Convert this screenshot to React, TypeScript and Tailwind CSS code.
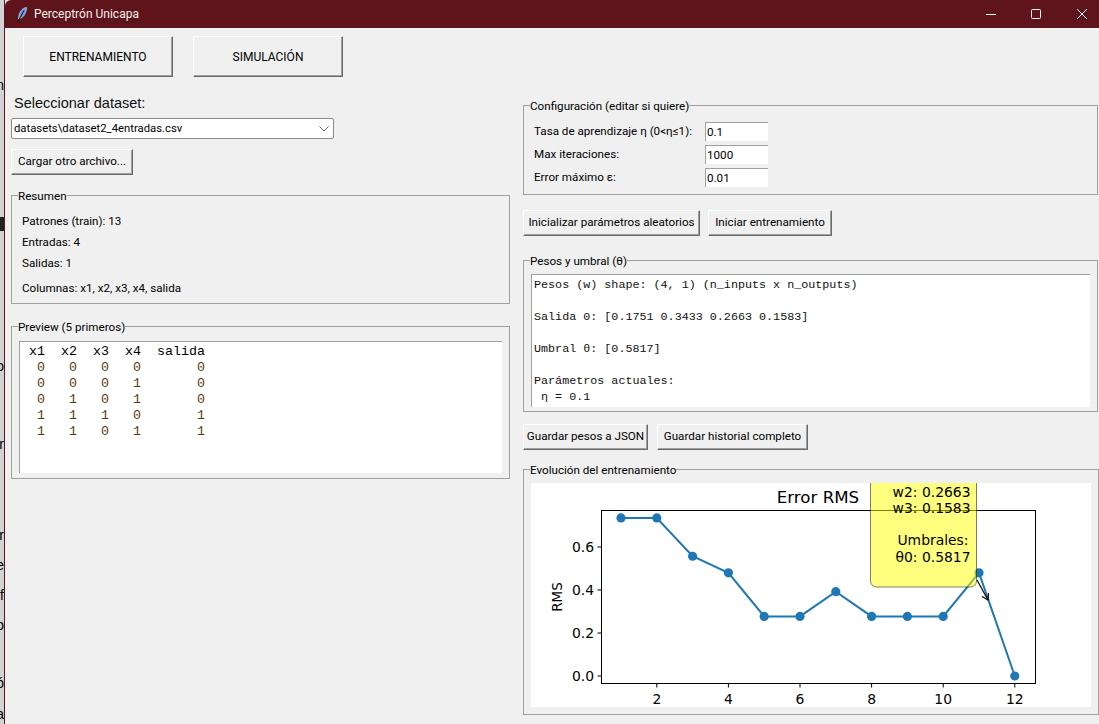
import { Fragment, type ReactNode } from "react";

const uiFont = "font-['Roboto',sans-serif]";
const chartFont = "DejaVu Sans, sans-serif";

const desktopBits = [
  { y: 77, text: "n" },
  { y: 358, text: "o" },
  { y: 436, text: "r" },
  { y: 527, text: "r" },
  { y: 557, text: "e" },
  { y: 587, text: "if" },
  { y: 617, text: "o" },
  { y: 675, text: "ó" },
  { y: 706, text: "a" },
];

const previewHeader = "x1  x2  x3  x4  salida";
const previewRows = [
  " 0   0   0   0       0",
  " 0   0   0   1       0",
  " 0   1   0   1       0",
  " 1   1   1   0       1",
  " 1   1   0   1       1",
];

const pesosText = `Pesos (w) shape: (4, 1) (n_inputs x n_outputs)

Salida 0: [0.1751 0.3433 0.2663 0.1583]

Umbral θ: [0.5817]

Parámetros actuales:
 η = 0.1`;

const rms = [0.735, 0.735, 0.557, 0.48, 0.277, 0.277, 0.392, 0.277, 0.277, 0.277, 0.48, 0];

const xAt = (n: number) => 90 + 35.8 * (n - 1);
const yAt = (v: number) => 193 - 215 * v;

function RaisedButton({ className, children }: { className: string; children: ReactNode }) {
  return (
    <button
      type="button"
      className={`flex items-center justify-center border border-t-white border-l-white border-r-[#696969] border-b-[#696969] bg-[#f0f0f0] whitespace-nowrap text-black shadow-[inset_-1px_-1px_0_#a0a0a0] ${className}`}
    >
      {children}
    </button>
  );
}

function Group({ title, className, children }: { title: string; className: string; children: ReactNode }) {
  return (
    <fieldset className={`border border-[#a0a0a0] ${className}`}>
      <legend className="ml-[6px] translate-y-px text-[11.65px] leading-[14px] text-black">{title}</legend>
      {children}
    </fieldset>
  );
}

function ConfigRow({ label, value }: { label: string; value: string }) {
  return (
    <div className="flex h-[19px] items-center">
      <span className="w-[171px] pt-[1px] text-[11.65px] text-black">{label}</span>
      <span className="flex h-[19px] w-[63px] items-center border-t border-l border-[#a0a0a0] bg-white pt-[1px] pl-[1px] text-[11.65px] text-black">
        {value}
      </span>
    </div>
  );
}

function ErrorChart() {
  const points = rms.map((v, i) => `${xAt(i + 1)},${yAt(v)}`).join(" ");
  return (
    <svg width="560" height="224" className="block overflow-hidden" fontFamily={chartFont}>
      <text x="287" y="20" fontSize="16.67" textAnchor="middle" fill="#000">
        Error RMS
      </text>
      <rect x="70.5" y="27.5" width="434" height="173" fill="none" stroke="#000" strokeWidth="1" />
      {[2, 4, 6, 8, 10, 12].map((n) => (
        <Fragment key={n}>
          <line x1={xAt(n)} x2={xAt(n)} y1="201" y2="204.5" stroke="#000" />
          <text x={xAt(n)} y="220.5" fontSize="13.9" textAnchor="middle" fill="#000">
            {n}
          </text>
        </Fragment>
      ))}
      {[0, 0.2, 0.4, 0.6].map((v) => (
        <Fragment key={v}>
          <line x1="66.5" x2="70" y1={yAt(v)} y2={yAt(v)} stroke="#000" />
          <text x="63" y={yAt(v) + 5} fontSize="13.9" textAnchor="end" fill="#000">
            {v.toFixed(1)}
          </text>
        </Fragment>
      ))}
      <text x="31" y="114" fontSize="13.5" textAnchor="middle" fill="#000" transform="rotate(-90 31 114)">
        RMS
      </text>
      <polyline points={points} fill="none" stroke="#1f77b4" strokeWidth="2" />
      {rms.map((v, i) => (
        <circle key={i} cx={xAt(i + 1)} cy={yAt(v)} r="4.6" fill="#1f77b4" />
      ))}
      <rect x="339.5" y="-12" width="106" height="116" rx="6" fill="#ffff00" fillOpacity="0.5" stroke="#000" strokeOpacity="0.5" />
      <g fontSize="13.9" fill="#000" textAnchor="end">
        <text x="439.5" y="14">w2: 0.2663</text>
        <text x="439.5" y="30">w3: 0.1583</text>
        <text x="437.5" y="62">Umbrales:</text>
        <text x="439.5" y="79">θ0: 0.5817</text>
      </g>
      <line x1="446" y1="97" x2="457" y2="117" stroke="#000" strokeWidth="1.2" />
      <polyline points="451,113.5 457,117 457.5,110" fill="none" stroke="#000" strokeWidth="1.2" />
    </svg>
  );
}

export default function App() {
  return (
    <div className={`flex h-[724px] w-[1099px] overflow-hidden bg-[#f0f0f0] ${uiFont}`}>
      {/* what shows of the desktop behind the window */}
      <div className="relative w-[4px] shrink-0 overflow-hidden bg-[#d4d3d4] font-['Liberation_Sans',sans-serif] text-[14px] leading-[16px] text-black">
        {desktopBits.map((bit) => (
          <span key={bit.y} className="absolute right-[0px]" style={{ top: bit.y }}>
            {bit.text}
          </span>
        ))}
        <div className="absolute top-[217px] left-0 h-[14px] w-[4px] bg-[#222222]" />
      </div>

      <div className="flex min-w-0 flex-1 flex-col border-l border-[#5f131a]">
        <div className="flex h-[28px] shrink-0 items-center rounded-tl-[6px] bg-[#5f131a] text-white">
          <svg width="10" height="15" viewBox="0 0 10 15" className="ml-[12px]">
            <path d="M9.5 0.5 C5 1 1.5 5.5 1.5 12 L5 10.5 C8 8 9.5 4.5 9.5 0.5Z" fill="#5b9be8" stroke="#d8e8ff" strokeWidth="0.6" />
            <path d="M7 3.5 L1 14.5" stroke="#0a0a14" strokeWidth="1" />
          </svg>
          <span className="ml-[7px] text-[12px] text-[#f4eeee]">Perceptrón Unicapa</span>
          <div className="ml-auto flex h-full items-center">
            <svg width="12" height="12" viewBox="0 0 12 12" className="mr-[33px]" fill="none" stroke="#fff">
              <path d="M1 6.5H11" />
            </svg>
            <svg width="12" height="12" viewBox="0 0 12 12" className="mr-[34px]" fill="none" stroke="#fff">
              <rect x="1.5" y="1.5" width="9" height="9" rx="1" />
            </svg>
            <svg width="12" height="12" viewBox="0 0 12 12" className="mr-[11px]" fill="none" stroke="#fff">
              <path d="M1 1L11 11M11 1L1 11" />
            </svg>
          </div>
        </div>

        <div className="flex gap-[20px] pt-[8px] pl-[18px]">
          <RaisedButton className="h-[41px] w-[150px] text-[12px]">ENTRENAMIENTO</RaisedButton>
          <RaisedButton className="h-[41px] w-[150px] text-[12px]">SIMULACIÓN</RaisedButton>
        </div>

        <div className="flex gap-[13px] pt-[16px] pl-[6px]">
          {/* dataset column */}
          <div className="flex w-[499px] shrink-0 flex-col">
            <div className="h-[20px] pl-[3px] font-['Liberation_Sans',sans-serif] text-[14.5px] leading-[20px] text-[#111111]">
              Seleccionar dataset:
            </div>
            <div className="mt-[5px] flex h-[21px] w-[323px] items-center justify-between rounded-[2px] border border-[#8a8a8a] bg-white pt-[1px] pr-[3px] pl-[2px] text-[11.3px] text-black">
              <span>datasets\dataset2_4entradas.csv</span>
              <svg width="10" height="6" viewBox="0 0 10 6" fill="none" stroke="#606060" className="mr-[1px]">
                <path d="M0.5 0.5L5 5L9.5 0.5" />
              </svg>
            </div>
            <RaisedButton className="mt-[10px] h-[26px] w-[122px] text-[11.65px]">Cargar otro archivo...</RaisedButton>

            <Group title="Resumen" className="mt-[13px] h-[116px] text-[11.65px] text-black">
              <div className="mt-[9px] flex h-[21px] items-center pl-[10px]">Patrones (train): 13</div>
              <div className="flex h-[21px] items-center pl-[10px]">Entradas: 4</div>
              <div className="flex h-[21px] items-center pl-[10px]">Salidas: 1</div>
              <div className="mt-[4px] flex h-[21px] items-center pl-[10px]">Columnas: x1, x2, x3, x4, salida</div>
            </Group>

            <Group title="Preview (5 primeros)" className="mt-[15px] h-[160px]">
              <div className="mx-[7px] mt-[8px] h-[132px] border-t border-l border-[#a0a0a0] bg-white pt-[2px] pl-[9px] font-['Liberation_Mono',monospace] text-[13.33px] leading-[16px]">
                <div className="whitespace-pre text-black">{previewHeader}</div>
                {previewRows.map((row, i) => (
                  <div key={i} className="whitespace-pre text-[#5a3a10]">
                    {row}
                  </div>
                ))}
              </div>
            </Group>
          </div>

          {/* training column */}
          <div className="flex min-w-0 flex-1 flex-col pt-[5px] pr-[1px]">
            <Group title="Configuración (editar si quiere)" className="h-[97px]">
              <div className="mt-[10px] flex flex-col gap-[4px] pl-[10px]">
                <ConfigRow label="Tasa de aprendizaje η (0<η≤1):" value="0.1" />
                <ConfigRow label="Max iteraciones:" value="1000" />
                <ConfigRow label="Error máximo ε:" value="0.01" />
              </div>
            </Group>

            <div className="mt-[15px] flex gap-[8px]">
              <RaisedButton className="h-[26px] w-[177px] text-[11.65px]">Inicializar parámetros aleatorios</RaisedButton>
              <RaisedButton className="h-[26px] w-[124px] text-[11.65px]">Iniciar entrenamiento</RaisedButton>
            </div>

            <Group title="Pesos y umbral (θ)" className="mt-[17px] h-[159px]">
              <pre className="mx-[7px] mt-[7px] h-[133px] overflow-hidden border-t border-l border-[#a0a0a0] bg-white pt-[2px] pl-[2px] font-['Liberation_Mono',monospace] text-[11.73px] leading-[16px] text-[#111111]">
                {pesosText}
              </pre>
            </Group>

            <div className="mt-[12px] flex gap-[9px]">
              <RaisedButton className="h-[26px] w-[125px] text-[11.65px]">Guardar pesos a JSON</RaisedButton>
              <RaisedButton className="h-[26px] w-[151px] text-[11.65px]">Guardar historial completo</RaisedButton>
            </div>

            <Group title="Evolución del entrenamiento" className="mt-[12px] h-[253px]">
              <div className="mx-[7px] mt-[7px] h-[224px] overflow-hidden bg-white">
                <ErrorChart />
              </div>
            </Group>
          </div>
        </div>
      </div>
    </div>
  );
}
